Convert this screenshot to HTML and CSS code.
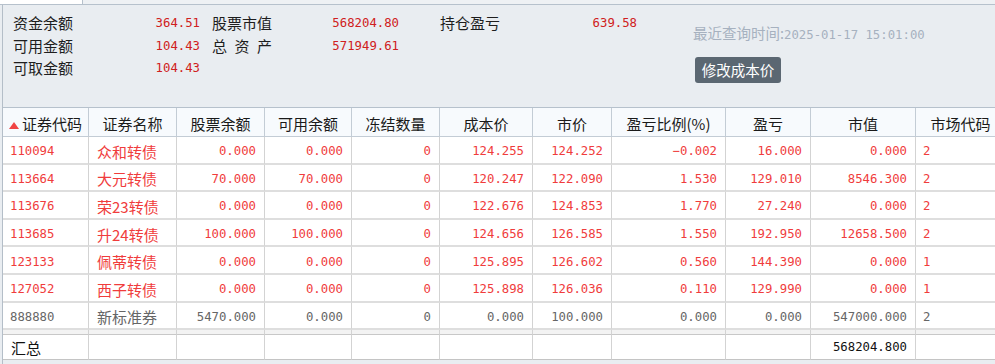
FILE: index.html
```html
<!DOCTYPE html>
<html lang="zh-CN">
<head>
    <meta charset="UTF-8">
    <title>持仓</title>
    <link rel="stylesheet" href="styles.css">
</head>
<body>
    <div class="tabstrip"><div class="tab"></div></div>

    <div class="window">
        <!-- 资金汇总 -->
        <div class="summary">
            <div class="summary-grid">
                <div class="pair"><span class="label">资金余额</span><span class="value">364.51</span></div>
                <div class="pair"><span class="label">股票市值</span><span class="value">568204.80</span></div>
                <div class="pair pair-last"><span class="label">持仓盈亏</span><span class="value">639.58</span></div>

                <div class="pair"><span class="label">可用金额</span><span class="value">104.43</span></div>
                <div class="pair"><span class="label label-spread">总资产</span><span class="value">571949.61</span></div>
                <div></div>

                <div class="pair"><span class="label">可取金额</span><span class="value">104.43</span></div>
            </div>

            <div class="query">
                <div class="query-time">最近查询时间:<span class="num">2025-01-17 15:01:00</span></div>
                <button class="btn" type="button">修改成本价</button>
            </div>
        </div>

        <!-- 持仓列表 -->
        <table class="holdings">
            <thead>
                <tr>
                    <th class="w1"><svg class="sort" width="10" height="7" viewBox="0 0 10 7"><polygon points="5,0 10,7 0,7" fill="#f04444"/></svg>证券代码</th>
                    <th class="w2">证券名称</th>
                    <th class="w3">股票余额</th>
                    <th class="w4">可用余额</th>
                    <th class="w5">冻结数量</th>
                    <th class="w6">成本价</th>
                    <th class="w7">市价</th>
                    <th class="w8">盈亏比例(%)</th>
                    <th class="w9">盈亏</th>
                    <th class="w10">市值</th>
                    <th class="w11">市场代码</th>
                </tr>
            </thead>
            <tbody>
                <tr class="up">
                    <td class="code">110094</td><td class="name">众和转债</td>
                    <td>0.000</td><td>0.000</td><td>0</td><td>124.255</td><td>124.252</td>
                    <td>−0.002</td><td>16.000</td><td>0.000</td><td class="mkt">2</td>
                </tr>
                <tr class="up">
                    <td class="code">113664</td><td class="name">大元转债</td>
                    <td>70.000</td><td>70.000</td><td>0</td><td>120.247</td><td>122.090</td>
                    <td>1.530</td><td>129.010</td><td>8546.300</td><td class="mkt">2</td>
                </tr>
                <tr class="up">
                    <td class="code">113676</td><td class="name">荣23转债</td>
                    <td>0.000</td><td>0.000</td><td>0</td><td>122.676</td><td>124.853</td>
                    <td>1.770</td><td>27.240</td><td>0.000</td><td class="mkt">2</td>
                </tr>
                <tr class="up">
                    <td class="code">113685</td><td class="name">升24转债</td>
                    <td>100.000</td><td>100.000</td><td>0</td><td>124.656</td><td>126.585</td>
                    <td>1.550</td><td>192.950</td><td>12658.500</td><td class="mkt">2</td>
                </tr>
                <tr class="up">
                    <td class="code">123133</td><td class="name">佩蒂转债</td>
                    <td>0.000</td><td>0.000</td><td>0</td><td>125.895</td><td>126.602</td>
                    <td>0.560</td><td>144.390</td><td>0.000</td><td class="mkt">1</td>
                </tr>
                <tr class="up">
                    <td class="code">127052</td><td class="name">西子转债</td>
                    <td>0.000</td><td>0.000</td><td>0</td><td>125.898</td><td>126.036</td>
                    <td>0.110</td><td>129.990</td><td>0.000</td><td class="mkt">1</td>
                </tr>
                <tr class="flat">
                    <td class="code">888880</td><td class="name">新标准券</td>
                    <td>5470.000</td><td>0.000</td><td>0</td><td>0.000</td><td>100.000</td>
                    <td>0.000</td><td>0.000</td><td>547000.000</td><td class="mkt">2</td>
                </tr>
                <tr class="spacer">
                    <td></td><td></td><td></td><td></td><td></td><td></td><td></td><td></td><td></td><td></td><td></td>
                </tr>
                <tr class="total">
                    <td class="name">汇总</td><td></td><td></td><td></td><td></td><td></td><td></td><td></td><td></td>
                    <td>568204.800</td><td></td>
                </tr>
            </tbody>
        </table>
    </div>
</body>
</html>
```

FILE: styles.css
```css
body {
    margin: 0;
    background-color: #e9edf1;
    font-family: "Noto Sans CJK SC", sans-serif;
    color: #1e1e1e;
    overflow: hidden;
    width: 995px;
    height: 364px;
}

/* top tab strip */
.tabstrip {
    height: 4px;
    background-color: #eef1f4;
    border-bottom: 1px solid #b6c1cc;
}

.tabstrip .tab {
    width: 82px;
    height: 4px;
    background-color: #fff;
    border-right: 1px solid #b6c1cc;
}

.window {
    margin-left: 2px;
    border-left: 1px solid #b4bec8;
    height: 359px;
    overflow: hidden;
}

/* summary panel */
.summary {
    display: flex;
    height: 102px;
    box-sizing: border-box;
    padding: 7px 0 0 10px;
}

.summary-grid {
    display: grid;
    grid-template-columns: 199px 228px 197px;
    grid-auto-rows: 22.5px;
    align-content: start;
}

.pair {
    display: flex;
    width: 187px;
    font-size: 15px;
    line-height: 22.5px;
}

.pair-last {
    width: 197px;
}

.label {
    width: 60px;
    white-space: nowrap;
}

.label-spread {
    text-align: justify;
    text-align-last: justify;
}

.value {
    flex: 1;
    text-align: right;
    color: #d02020;
    font-family: "DejaVu Sans Mono", monospace;
    font-size: 12.3px;
}

.query {
    margin-left: 56px;
    padding-top: 11px;
}

.query-time {
    color: #a6b1bf;
    font-size: 14.5px;
    line-height: 20px;
    white-space: nowrap;
}

.query-time .num {
    font-family: "DejaVu Sans Mono", monospace;
    font-size: 12.3px;
}

.btn {
    display: block;
    margin: 12px 0 0 2px;
    width: 86px;
    height: 26px;
    padding: 0;
    border: none;
    border-radius: 3px;
    background-color: #5b6772;
    color: #fff;
    font-family: "Noto Sans CJK SC", sans-serif;
    font-size: 14.5px;
    line-height: 26px;
}

/* holdings table */
.holdings {
    border-collapse: separate;
    border-spacing: 0;
    table-layout: fixed;
    width: 1003px;
    border-top: 1px solid #b6c1cc;
    background-color: #fff;
}

.holdings th,
.holdings td {
    box-sizing: border-box;
    padding: 0 8px;
    white-space: nowrap;
    overflow: hidden;
}

.holdings th {
    height: 29px;
    padding: 3px 0 0;
    background-color: #f7fafd;
    border-right: 1px solid #c3ccd5;
    border-bottom: 1px solid #c3ccd5;
    font-size: 15px;
    font-weight: normal;
    color: #1a1a1a;
    text-align: center;
}

.w1 { width: 86px; }
.w2 { width: 88px; }
.w3 { width: 88px; }
.w4 { width: 87px; }
.w5 { width: 88px; }
.w6 { width: 93px; }
.w7 { width: 79px; }
.w8 { width: 114px; }
.w9 { width: 85px; }
.w10 { width: 105px; }
.w11 { width: 90px; }

.sort {
    margin-right: 3px;
    vertical-align: 1px;
}

.holdings td {
    height: 27.6px;
    padding-top: 3px;
    border-right: 1px solid #d3d3d3;
    border-bottom: 2px solid #dedede;
    text-align: right;
    font-family: "DejaVu Sans Mono", monospace;
    font-size: 12.3px;
}

.holdings td.code,
.holdings td.mkt {
    text-align: left;
    padding-left: 7px;
}

.holdings td.name {
    text-align: left;
    font-family: "Noto Sans CJK SC", sans-serif;
    font-size: 15px;
}

.up td {
    color: #f03c3c;
}

.flat td {
    color: #666;
}

.spacer td {
    height: 5px;
    padding: 0;
    background-color: #f3f3f3;
    border-bottom: 1px solid #c8c8c8;
}

.total td {
    height: 25px;
    padding-top: 0;
    color: #111;
    border-bottom: 1px solid #c4c4c4;
}
```
